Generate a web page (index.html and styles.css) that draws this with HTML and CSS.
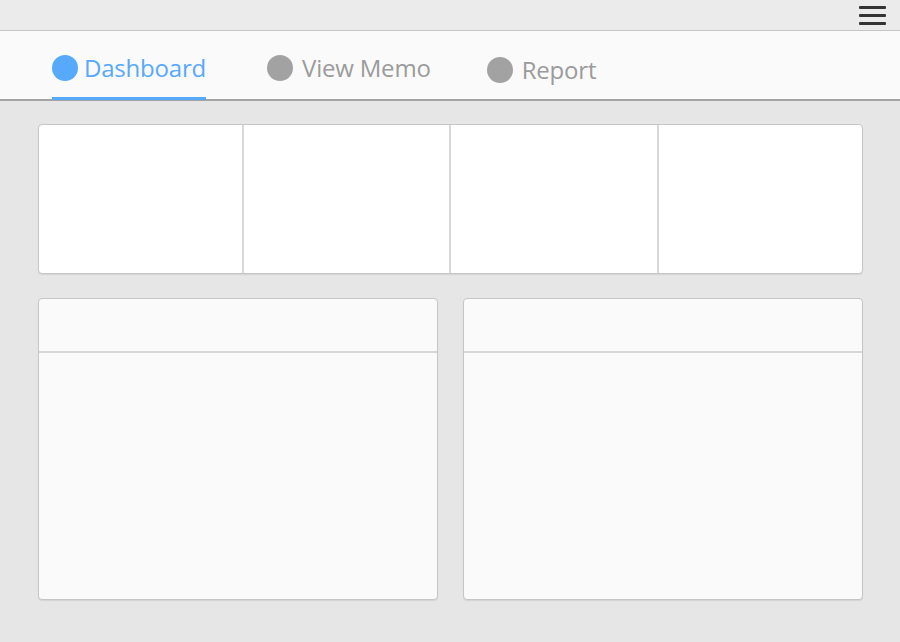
FILE: index.html
```html
<!DOCTYPE html>
<html>
<head>
<meta charset="utf-8">
<link rel="stylesheet" href="styles.css">
</head>
<body>
<div class="topbar">
  <button class="menu" aria-label="Menu">
    <span></span><span></span><span></span>
  </button>
</div>
<nav class="tabs">
  <a class="tab active"><span class="dot"></span><span class="label">Dashboard</span></a>
  <a class="tab"><span class="dot"></span><span class="label">View Memo</span></a>
  <a class="tab tab-low"><span class="dot"></span><span class="label">Report</span></a>
</nav>
<main class="content">
  <section class="stats">
    <div class="stat"></div>
    <div class="stat"></div>
    <div class="stat"></div>
    <div class="stat"></div>
  </section>
  <section class="panels">
    <div class="panel"><div class="panel-head"></div><div class="panel-body"></div></div>
    <div class="panel"><div class="panel-head"></div><div class="panel-body"></div></div>
  </section>
</main>
</body>
</html>
```
FILE: styles.css
```css
* { box-sizing: border-box; }
html, body { margin: 0; padding: 0; }
body {
  width: 900px;
  height: 642px;
  background: #e6e6e6;
  font-family: "Open Sans", "Liberation Sans", sans-serif;
  overflow: hidden;
}
.topbar {
  height: 31px;
  background: #ebebeb;
  border-bottom: 1px solid #c4c4c4;
  display: flex;
  justify-content: flex-end;
  align-items: flex-start;
  padding-right: 14px;
}
.menu {
  border: 0;
  background: none;
  padding: 6px 0 0 0;
  width: 27px;
  display: flex;
  flex-direction: column;
  gap: 5px;
}
.menu span {
  display: block;
  height: 3px;
  background: #333;
  border-radius: 1px;
}
.tabs {
  height: 70px;
  background: #fafafa;
  border-bottom: 2px solid #a3a3a3;
  display: flex;
  align-items: stretch;
  padding-left: 52px;
  gap: 61px;
}
.tab {
  display: flex;
  align-items: center;
  gap: 9px;
  color: #9b9b9b;
  font-size: 24px;
  letter-spacing: -0.2px;
  border-bottom: 3px solid transparent;
  margin-bottom: -1px;
  padding-top: 8px;
}
.tab.active {
  gap: 6px;
  color: #57a9fc;
  border-bottom-color: #57a9fc;
}
.tab-low { padding-top: 12px; margin-left: -5px; }
.dot {
  width: 26px;
  height: 26px;
  border-radius: 50%;
  background: #a2a2a2;
  flex: none;
}
.tab.active .dot { background: #57a9fc; }
.label { line-height: 1; }
.content {
  padding: 23px 37px 0 38px;
  display: flex;
  flex-direction: column;
  gap: 24px;
}
.stats {
  height: 150px;
  background: #fff;
  border: 1px solid #c6c6c6;
  border-radius: 4px;
  box-shadow: 0 1px 1px rgba(0,0,0,0.08);
  display: grid;
  grid-template-columns: 205px 207px 208px 1fr;
}
.stat { border-right: 2px solid #d9d9d9; }
.stat:last-child { border-right: 0; }
.panels {
  display: grid;
  grid-template-columns: 400px 400px;
  gap: 25px;
}
.panel {
  height: 302px;
  background: #fafafa;
  border: 1px solid #c6c6c6;
  border-radius: 4px;
  box-shadow: 0 1px 1px rgba(0,0,0,0.08);
  display: flex;
  flex-direction: column;
}
.panel-head {
  height: 54px;
  border-bottom: 2px solid #d6d6d6;
}
.panel-body { flex: 1; }
```
